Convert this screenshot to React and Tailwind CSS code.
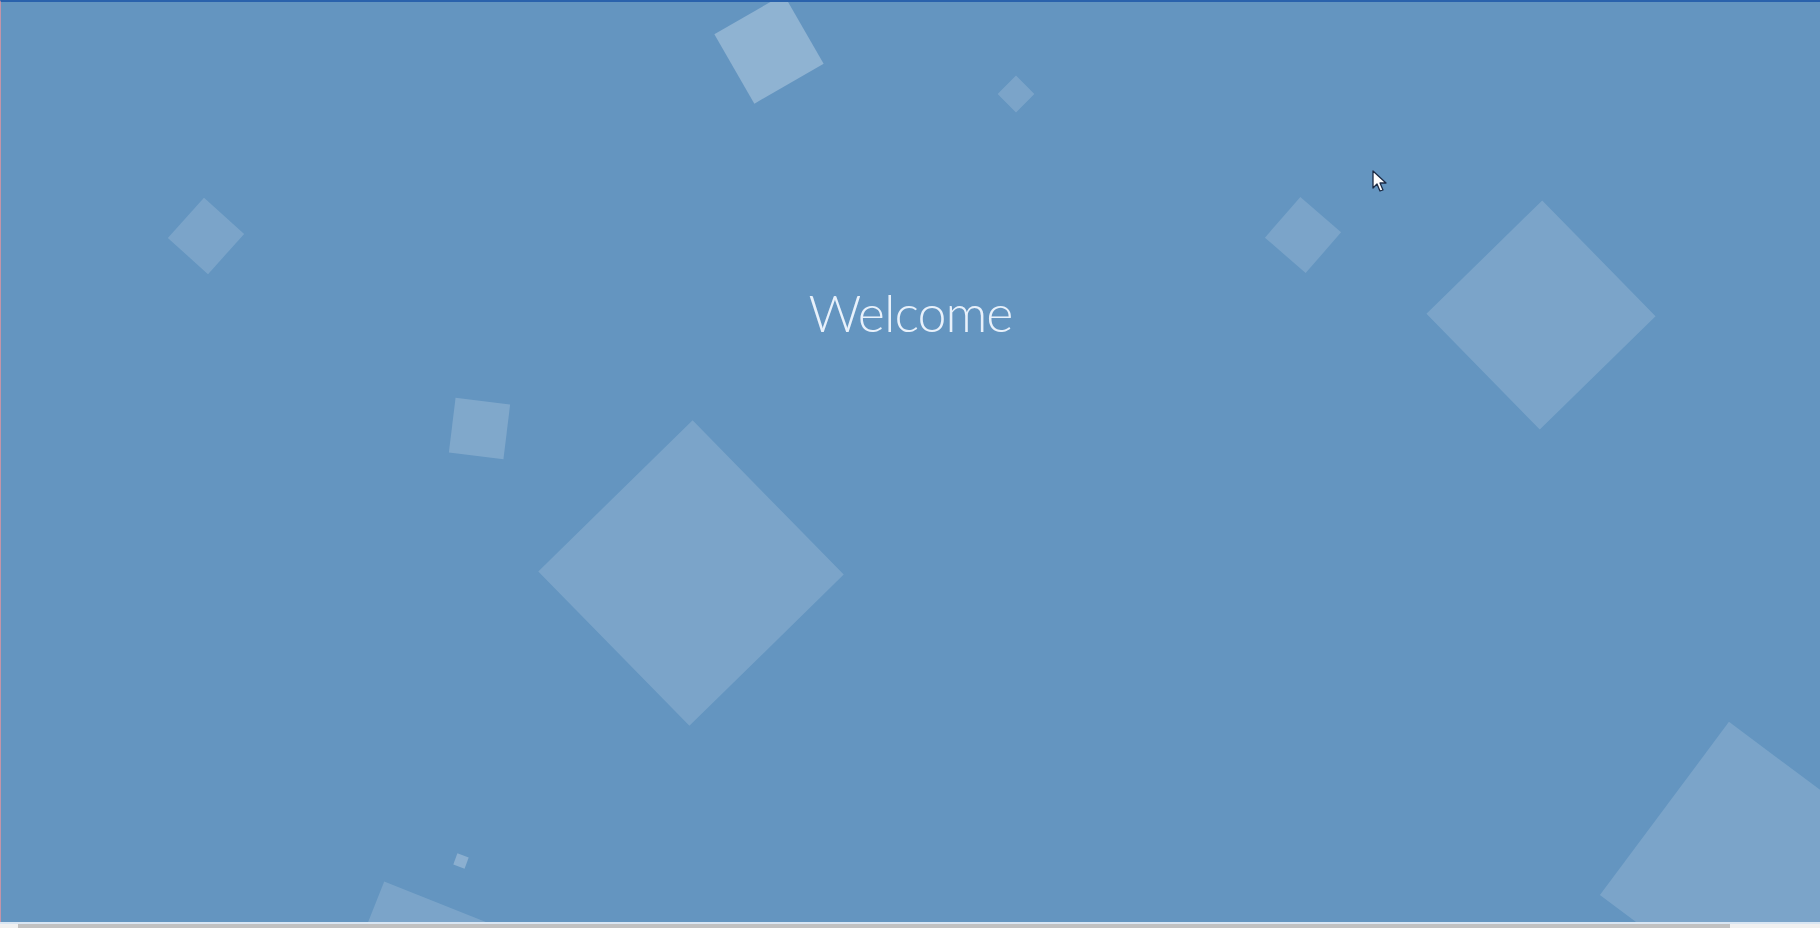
const shapes = [
  'left-[728px] top-[7px] w-[80px] h-[80px] rotate-[60deg] bg-white/28',
  'left-[1002px] top-[79px] w-[26px] h-[26px] rotate-[45deg] bg-white/15',
  'left-[178px] top-[207px] w-[54px] h-[54px] rotate-[42deg] bg-white/15',
  'left-[451px] top-[399px] w-[55px] h-[55px] rotate-[7deg] bg-white/18',
  'left-[582px] top-[463px] w-[216px] h-[216px] rotate-[45.6deg] bg-white/15',
  'left-[1275px] top-[206px] w-[54px] h-[54px] rotate-[41deg] bg-white/15',
  'left-[1459px] top-[232px] w-[162px] h-[162px] rotate-[45.6deg] bg-white/15',
  'left-[1642px] top-[763px] w-[216px] h-[216px] rotate-[36.7deg] bg-white/15',
  'left-[454px] top-[853px] w-[12px] h-[12px] rotate-[20deg] bg-white/25',
  'left-[359px] top-[896px] w-[110px] h-[110px] rotate-[21.7deg] bg-white/15',
];

function Cursor() {
  return (
    <svg
      className="absolute left-[1371px] top-[168px]"
      width="17"
      height="24"
      viewBox="0 0 17 24"
    >
      <path
        d="M1 1 L1 18 L5 14 L8 21 L11 20 L8 13 L14 13 Z"
        fill="white"
        stroke="#1b2a44"
        strokeWidth="1.3"
        strokeLinejoin="round"
      />
    </svg>
  );
}

export default function App() {
  return (
    <div className="flex flex-col w-[1820px] h-[928px] overflow-hidden">
      <div className="relative flex-1 bg-[#6495c0] border-t-2 border-t-[#2a62ac] border-l border-l-[#c394a8] overflow-hidden">
        {shapes.map((cls, i) => (
          <div key={i} className={`absolute ${cls}`} />
        ))}

        <div className="relative flex justify-center pt-[270px]">
          <h1 className="text-[#e8f1fb] text-[52px] leading-[80px] font-light tracking-[-1px] font-['Lato','Open_Sans',sans-serif]">
            Welcome
          </h1>
        </div>

        <Cursor />
      </div>

      <div className="h-[2px] bg-[#d9e6f3]" />
      <div className="flex h-[4px] bg-[#f0f0f0]">
        <div className="w-[18px]" />
        <div className="w-[1712px] bg-[#c1c1c1]" />
      </div>
    </div>
  );
}
